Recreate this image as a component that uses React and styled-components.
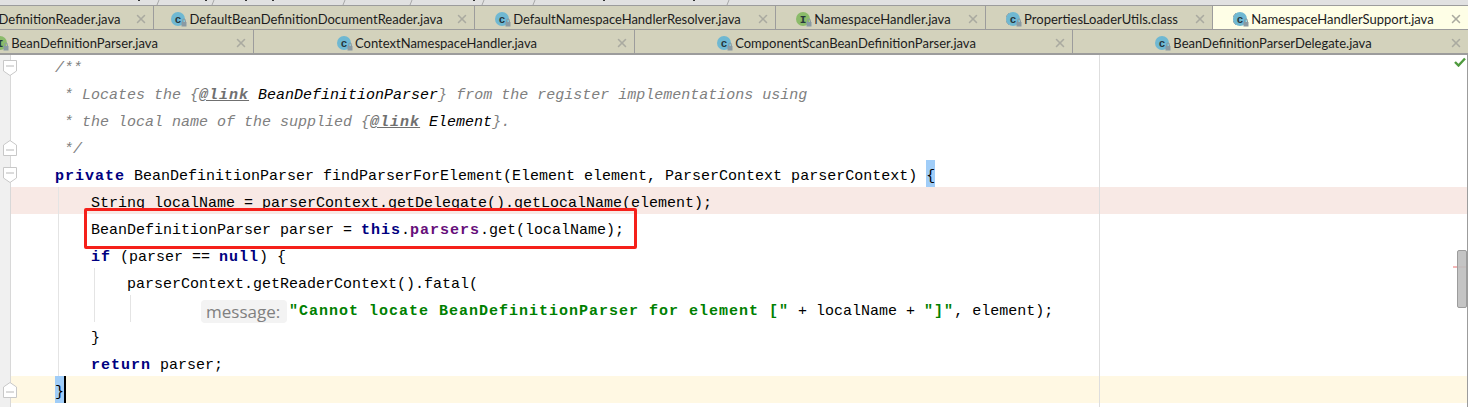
import React from 'react';
import styled, { createGlobalStyle } from 'styled-components';
import { X } from 'lucide-react';

const colors = {
  keyword: '#000080',
  field: '#660e7a',
  string: '#008000',
  comment: '#808080',
  plain: '#000000',
  tabLine: '#9c9c9c',
};

const topTabs = [
  { name: 'DefinitionReader.java', width: 154, noIcon: true, offset: -10 },
  { name: 'DefaultBeanDefinitionDocumentReader.java', width: 321, kind: 'c' },
  { name: 'DefaultNamespaceHandlerResolver.java', width: 301, kind: 'c' },
  { name: 'NamespaceHandler.java', width: 210, kind: 'i' },
  { name: 'PropertiesLoaderUtils.class', width: 227, kind: 'd' },
  { name: 'NamespaceHandlerSupport.java', width: 255, kind: 'd', active: true },
];

const bottomTabs = [
  { name: 'BeanDefinitionParser.java', width: 254, kind: 'i', offset: -44 },
  { name: 'ContextNamespaceHandler.java', width: 381, kind: 'c' },
  { name: 'ComponentScanBeanDefinitionParser.java', width: 438, kind: 'c' },
  { name: 'BeanDefinitionParserDelegate.java', width: 395, kind: 'c' },
];

// leftovers of the cropped toolbar above the tabs
const stripSlashes = [157, 212, 343, 410, 482, 533, 727];
const stripSpecks = [138, 205, 245, 272, 473, 603, 693];

function FileIcon({ kind }) {
  const fill = kind === 'i' ? '#8bbb6a' : '#6fb8d2';
  const letter = kind === 'i' ? 'I' : 'c';
  return (
    <IconBox>
      <svg width="18" height="16" viewBox="0 0 18 16">
        {kind === 'd' && <path d="M3 2.2A7 7 0 0 0 3 13.8" fill="none" stroke="#9a9a9a" strokeWidth="1" />}
        <circle cx="7" cy="8" r="7" fill={fill} />
        <text x="7" y="11.5" textAnchor="middle" fontSize="11" fontWeight="700" fontFamily="Liberation Mono, monospace" fill="#26363c">
          {letter}
        </text>
        <rect x="10.5" y="11" width="5" height="4.5" fill="#8a9aa3" />
        <path d="M11.5 11V9.5a1.5 1.5 0 0 1 3 0V11" fill="none" stroke="#8a9aa3" strokeWidth="1" />
      </svg>
    </IconBox>
  );
}

function FoldMark({ up }) {
  return (
    <FoldSvg width="14" height="16" viewBox="0 0 14 16">
      <path
        d={up ? 'M7 .5L13.5 5v10.5H.5V5z' : 'M.5 .5h13V11L7 15.5.5 11z'}
        fill="#fff"
        stroke="#c8c8c8"
      />
      <path d={up ? 'M3 10h8' : 'M3 6h8'} stroke="#b8b8b8" />
    </FoldSvg>
  );
}

function Tab({ tab, last }) {
  return (
    <TabCell $width={tab.width} $active={tab.active} $last={last}>
      <TabLabel $offset={tab.offset}>
        {!tab.noIcon && <FileIcon kind={tab.kind} />}
        <TabName>{tab.name}</TabName>
      </TabLabel>
      <CloseIcon size={14} strokeWidth={2.6} />
    </TabCell>
  );
}

const K = ({ children }) => <Keyword>{children}</Keyword>;

function App() {
  return (
    <>
      <GlobalStyle />
      <Window>
        <TopStrip>
          <svg width="1468" height="5" viewBox="0 0 1468 5">
            {stripSlashes.map((x) => (
              <path key={x} d={`M${x} 5l2-5`} stroke="#a8a8a8" />
            ))}
            {stripSpecks.map((x) => (
              <rect key={x} x={x} y="0" width="2" height="1" fill="#333" />
            ))}
          </svg>
        </TopStrip>
        <TabRow>
          {topTabs.map((tab, i) => (
            <Tab key={tab.name} tab={tab} last={i === topTabs.length - 1} />
          ))}
        </TabRow>
        <TabRow $bottom>
          {bottomTabs.map((tab, i) => (
            <Tab key={tab.name} tab={tab} last={i === bottomTabs.length - 1} />
          ))}
        </TabRow>
        <Editor>
          <Gutter>
            <FoldSlot $height={5} />
            <FoldMark />
            <FoldSlot $height={64} />
            <FoldMark up />
            <FoldSlot $height={11} />
            <FoldMark />
            <FoldSlot $height={199} />
            <FoldMark up />
          </Gutter>
          <Lines>
            <Line><Doc>/**</Doc></Line>
            <Line>
              <Doc> * Locates the {'{'}<DocTag>@link</DocTag> <DocRef>BeanDefinitionParser</DocRef>{'}'} from the register implementations using</Doc>
            </Line>
            <Line>
              <Doc> * the local name of the supplied {'{'}<DocTag>@link</DocTag> <DocRef>Element</DocRef>{'}'}.</Doc>
            </Line>
            <Line><Doc> */</Doc></Line>
            <Line>
              <K>private</K> BeanDefinitionParser findParserForElement(Element element, ParserContext parserContext) <BraceMatch>{'{'}</BraceMatch>
            </Line>
            <Line $indent={4} $bg="#f8e9e5" $guides={[47]}>String localName = parserContext.getDelegate().getLocalName(element);</Line>
            <Line $indent={4} $guides={[47]}>
              BeanDefinitionParser parser = <K>this</K>.<Field>parsers</Field>.get(localName);
            </Line>
            <Line $indent={4} $guides={[47]}>
              <K>if</K> (parser == <K>null</K>) {'{'}
            </Line>
            <Line $indent={8} $guides={[47, 83]}>parserContext.getReaderContext().fatal(</Line>
            <Line $indent={16} $guides={[47, 83, 119]}>
              <Hint>message:</Hint><Str>"Cannot locate BeanDefinitionParser for element ["</Str> + localName + <Str>"]"</Str>, element);
            </Line>
            <Line $indent={4} $guides={[47]}>{'}'}</Line>
            <Line $indent={4} $guides={[47]}>
              <K>return</K> parser;
            </Line>
            <Line $bg="#fff8e3">
              <BraceMatch>{'}'}</BraceMatch><Caret />
            </Line>
            <RedBox />
          </Lines>
          <RightMargin />
          <InspectionCheck viewBox="0 0 12 10" width="12" height="10">
            <path d="M1 5l3.5 3.5L11 1.5" fill="none" stroke="#4f9a3e" strokeWidth="2.4" />
          </InspectionCheck>
          <ErrorStripe />
          <ScrollThumb />
        </Editor>
      </Window>
    </>
  );
}

const GlobalStyle = createGlobalStyle`
  html, body {
    margin: 0;
    padding: 0;
    background: #fff;
  }
`;

const Window = styled.div`
  width: 1468px;
  height: 407px;
  overflow: hidden;
  display: flex;
  flex-direction: column;
`;

const TopStrip = styled.div`
  height: 6px;
  flex: none;
  background: #e1e1e1;
  border-bottom: 1px solid ${colors.tabLine};
  box-sizing: border-box;
  line-height: 0;
`;

const TabRow = styled.div`
  display: flex;
  flex: none;
  height: ${({ $bottom }) => ($bottom ? '25px' : '24px')};
  box-sizing: border-box;
  background: #d3d2bc;
  border-bottom: ${({ $bottom }) => ($bottom ? '2px' : '1px')} solid ${colors.tabLine};
`;

const TabCell = styled.div`
  position: relative;
  flex: none;
  width: ${({ $width }) => $width}px;
  box-sizing: border-box;
  display: flex;
  align-items: center;
  justify-content: center;
  padding: 3px 14px 0 0;
  background: ${({ $active }) => ($active ? '#fefee6' : 'transparent')};
  border-right: ${({ $last }) => ($last ? 'none' : `1px solid ${colors.tabLine}`)};
  overflow: hidden;
`;

const TabLabel = styled.div`
  display: flex;
  align-items: center;
  transform: translateX(${({ $offset }) => $offset || 0}px);
`;

const IconBox = styled.span`
  display: inline-flex;
  width: 18px;
  flex: none;
`;

const TabName = styled.span`
  font-family: 'Lato', 'Noto Sans', sans-serif;
  font-size: 13px;
  color: #1c1c1c;
  white-space: nowrap;
`;

const CloseIcon = styled(X)`
  position: absolute;
  right: 5px;
  top: 6px;
  color: #aaaaa0;
`;

const Editor = styled.div`
  position: relative;
  flex: 1;
  display: flex;
  min-height: 0;
  background: #fff;
  border-right: 1px solid ${colors.tabLine};
`;

const Gutter = styled.div`
  flex: none;
  width: 11px;
  box-sizing: border-box;
  background: #f0f0f0;
  border-right: 1px solid #d8d8d8;
  display: flex;
  flex-direction: column;
  align-items: flex-start;
  padding-left: 3px;
  position: relative;
  z-index: 1;
`;

const FoldSlot = styled.div`
  flex: none;
  height: ${({ $height }) => $height}px;
`;

const FoldSvg = styled.svg`
  flex: none;
  display: block;
`;

const Lines = styled.div`
  position: relative;
  flex: 1;
  margin-top: -3px;
  font-family: 'Liberation Mono', 'DejaVu Sans Mono', monospace;
  font-size: 15px;
  color: ${colors.plain};
`;

const Line = styled.div`
  height: 27px;
  line-height: 33px;
  box-sizing: border-box;
  padding-left: ${({ $indent = 0 }) => 44 + $indent * 9}px;
  white-space: pre;
  background-color: ${({ $bg }) => $bg || 'transparent'};
  background-image: ${({ $guides = [] }) =>
    $guides.length
      ? $guides.map(() => 'linear-gradient(#e4e4e4, #e4e4e4)').join(', ')
      : 'none'};
  background-size: 1px 100%;
  background-repeat: no-repeat;
  background-position: ${({ $guides = [] }) =>
    $guides.map((x) => `${x}px 0`).join(', ') || '0 0'};
`;

const Keyword = styled.span`
  color: ${colors.keyword};
  font-weight: 700;
  letter-spacing: 1px;
`;

const Field = styled(Keyword)`
  color: ${colors.field};
`;

const Str = styled(Keyword)`
  color: ${colors.string};
`;

const Doc = styled.span`
  color: ${colors.comment};
  font-style: italic;
`;

const DocTag = styled.span`
  color: #707070;
  font-weight: 700;
  letter-spacing: 1px;
  text-decoration: underline;
`;

const DocRef = styled.span`
  color: #000;
`;

const BraceMatch = styled.span`
  display: inline-block;
  height: 27px;
  vertical-align: top;
  background: #a0cdf8;
`;

const Caret = styled.span`
  display: inline-block;
  width: 2px;
  height: 27px;
  background: #000;
  vertical-align: top;
`;

const Hint = styled.span`
  display: inline-block;
  width: 86px;
  height: 23px;
  line-height: 23px;
  margin: 0 2px;
  padding-left: 5px;
  box-sizing: border-box;
  border-radius: 4px;
  background: #f3f3f3;
  color: #808080;
  font-family: 'Open Sans', 'Noto Sans', sans-serif;
  font-size: 17px;
  letter-spacing: 0;
  vertical-align: middle;
`;

const RedBox = styled.div`
  position: absolute;
  left: 73px;
  top: 156px;
  width: 553px;
  height: 41px;
  box-sizing: border-box;
  border: 3px solid #f5201a;
  border-radius: 2px;
`;

const RightMargin = styled.div`
  position: absolute;
  left: 1099px;
  top: 0;
  bottom: 0;
  width: 1px;
  background: #dedede;
`;

const InspectionCheck = styled.svg`
  position: absolute;
  right: 1px;
  top: 2px;
`;

const ErrorStripe = styled.div`
  position: absolute;
  right: 0;
  top: 211px;
  width: 14px;
  height: 2px;
  background: #f5b8b8;
`;

const ScrollThumb = styled.div`
  position: absolute;
  right: 0;
  top: 195px;
  width: 10px;
  height: 58px;
  box-sizing: border-box;
  background: rgba(190, 190, 190, 0.9);
  border: 1px solid ${colors.tabLine};
  border-radius: 2px;
`;

export default App;
